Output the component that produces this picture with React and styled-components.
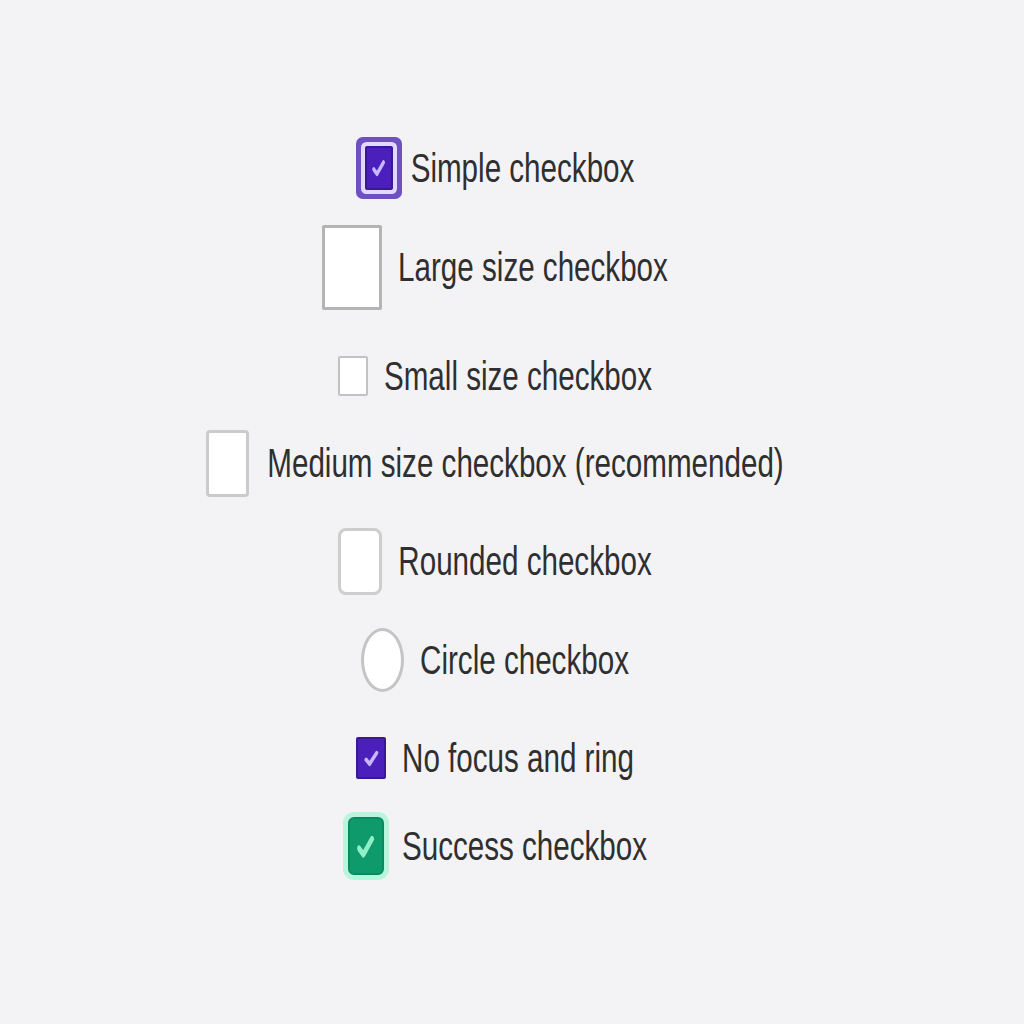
import React from "react";
import styled, { createGlobalStyle } from "styled-components";

const GlobalStyle = createGlobalStyle`
  html, body {
    margin: 0;
    padding: 0;
    background: #f3f3f5;
  }
  body {
    font-family: "Liberation Sans", Arial, sans-serif;
  }
`;

const Page = styled.div`
  min-height: 1024px;
  width: 990px;
  padding-top: 138px;
  box-sizing: border-box;
  display: flex;
  flex-direction: column;
  align-items: center;
  background: #f3f3f5;
`;

const Row = styled.label`
  display: flex;
  align-items: center;
  gap: ${(p) => p.$gap || 16}px;
  height: 60px;
  margin-top: ${(p) => p.$top || 0}px;
  cursor: pointer;
`;

const Box = styled.span`
  display: flex;
  align-items: center;
  justify-content: center;
  box-sizing: border-box;
  flex-shrink: 0;
  width: ${(p) => p.$w}px;
  height: ${(p) => p.$h}px;
  background: ${(p) => p.$bg || "#ffffff"};
  border: ${(p) => p.$bw || 2}px solid ${(p) => p.$border || "#bdbdbd"};
  border-radius: ${(p) => p.$radius || "2px"};
  box-shadow: ${(p) => p.$ring || "none"};
  margin: ${(p) => p.$margin || 0}px;
  svg {
    width: 72%;
    height: 64%;
  }
`;

const Text = styled.span`
  display: inline-block;
  font-size: 29.6px;
  line-height: 1;
  color: #2f2f2f;
  white-space: nowrap;
  transform: scaleY(1.38);
`;

const Check = ({ color }) => (
  <svg viewBox="0 0 16 16" fill="none" preserveAspectRatio="none">
    <path
      d="M3.5 9l3 2.8L12.5 4.6"
      stroke={color}
      strokeWidth="2.8"
      strokeLinecap="round"
      strokeLinejoin="round"
    />
  </svg>
);

const rows = [
  {
    label: "Simple checkbox",
    top: 0,
    box: {
      $w: 28,
      $h: 44,
      $bg: "#4b1fbc",
      $border: "#3a1796",
      $ring: "0 0 0 4px #e2d9ff, 0 0 0 9px #6e50c2",
      $margin: 9,
    },
    check: "#c8b6ff",
    gap: 9,
  },
  {
    label: "Large size checkbox",
    top: 39,
    box: { $w: 60, $h: 85, $bw: 3, $border: "#b4b4b4" },
  },
  {
    label: "Small size checkbox",
    top: 49,
    box: { $w: 30, $h: 40, $border: "#c2c2c2" },
  },
  {
    label: "Medium size checkbox (recommended)",
    top: 27,
    box: { $w: 43, $h: 67, $bw: 3, $border: "#cbcbcb", $radius: "4px" },
    gap: 18,
  },
  {
    label: "Rounded checkbox",
    top: 38,
    box: { $w: 44, $h: 67, $bw: 3, $border: "#cdcdcd", $radius: "8px" },
  },
  {
    label: "Circle checkbox",
    top: 39,
    box: { $w: 43, $h: 64, $bw: 3, $border: "#c4c4c4", $radius: "50%" },
  },
  {
    label: "No focus and ring",
    top: 38,
    box: { $w: 30, $h: 42, $bg: "#4b1fbc", $border: "#3a1796" },
    check: "#c8b6ff",
  },
  {
    label: "Success checkbox",
    top: 28,
    box: {
      $w: 36,
      $h: 58,
      $bg: "#0e9a6b",
      $border: "#0b8a5f",
      $radius: "6px",
      $ring: "0 0 0 5px #b8f5dc",
      $margin: 5,
    },
    check: "#8ff0c8",
    gap: 13,
  },
];

export default function App() {
  return (
    <>
      <GlobalStyle />
      <Page>
        {rows.map((r) => (
          <Row key={r.label} $top={r.top} $gap={r.gap}>
            <Box {...r.box}>{r.check && <Check color={r.check} />}</Box>
            <Text>{r.label}</Text>
          </Row>
        ))}
      </Page>
    </>
  );
}
